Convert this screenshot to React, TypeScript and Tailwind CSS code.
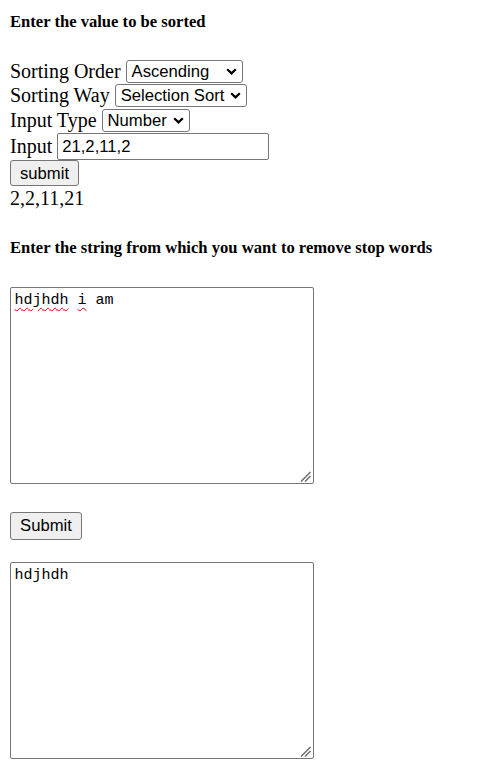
import React from "react";

function Chevron() {
  return (
    <svg width="11" height="7" viewBox="0 0 11 7" className="shrink-0">
      <path d="M1.2 1.3 L5.5 5.4 L9.8 1.3" fill="none" stroke="#000" strokeWidth="2.2" />
    </svg>
  );
}

function FakeSelect({ value, width }: { value: string; width: string }) {
  return (
    <div
      className={`inline-flex h-[23px] items-center justify-between rounded-[3px] border border-[#767676] bg-white pl-[5px] pr-[5px] font-['Liberation_Sans',Arial,sans-serif] text-[16.67px] leading-[19px] ${width}`}
    >
      <span>{value}</span>
      <Chevron />
    </div>
  );
}

function Grip() {
  return (
    <svg width="11" height="11" viewBox="0 0 11 11" className="absolute bottom-[1px] right-[2px]">
      <path d="M1 10.5 L10.5 1" stroke="#6b6b6b" strokeWidth="1.5" />
      <path d="M5 10.5 L10.5 5" stroke="#6b6b6b" strokeWidth="1.5" />
    </svg>
  );
}

function FakeTextarea({ children }: { children: React.ReactNode }) {
  return (
    <div className="relative h-[197px] w-[304px] rounded-[2px] border border-[#767676] bg-white pl-[3.5px] pt-[4px] font-['Liberation_Mono','DejaVu_Sans_Mono',monospace] text-[15px] leading-[17px]">
      <div className="whitespace-pre">{children}</div>
      <Grip />
    </div>
  );
}

export default function App() {
  return (
    <div className="min-h-screen bg-white pl-[10px] pt-[12px] font-['Liberation_Serif','Times_New_Roman',serif] text-[20px] text-black">
      <h5 className="text-[16.6px] font-bold leading-[19px]">Enter the value to be sorted</h5>

      <div className="mt-[28px] leading-[23px]">
        <div className="flex h-[24.5px] items-center gap-[5px]">
          <span>Sorting Order</span>
          <FakeSelect value="Ascending" width="w-[117px]" />
        </div>
        <div className="flex h-[24.5px] items-center gap-[5px]">
          <span>Sorting Way</span>
          <FakeSelect value="Selection Sort" width="w-[132px]" />
        </div>
        <div className="flex h-[24.5px] items-center gap-[5px]">
          <span>Input Type</span>
          <FakeSelect value="Number" width="w-[88px]" />
        </div>
        <div className="flex h-[27px] items-center gap-[5px]">
          <span>Input</span>
          <div className="flex h-[27px] w-[212px] items-center rounded-[2px] border border-[#767676] bg-white pl-[4px] font-['Liberation_Sans',Arial,sans-serif] text-[16.67px]">
            21,2,11,2
          </div>
        </div>
        <div className="flex h-[27px] items-center">
          <div className="flex h-[26px] w-[69px] items-center justify-center rounded-[3px] border border-[#767676] bg-[#efefef] font-['Liberation_Sans',Arial,sans-serif] text-[16.67px]">
            submit
          </div>
        </div>
        <div className="h-[23px]">2,2,11,21</div>
      </div>

      <h5 className="mt-[28.5px] text-[16.6px] font-bold leading-[19px]">
        Enter the string from which you want to remove stop words
      </h5>

      <div className="mt-[29.5px]">
        <FakeTextarea>
          <span className="underline decoration-red-600 decoration-wavy decoration-1 underline-offset-[3px]">hdjhdh</span>
          <span> </span>
          <span className="underline decoration-red-600 decoration-wavy decoration-1 underline-offset-[3px]">i</span>
          <span> am</span>
        </FakeTextarea>
      </div>

      <div className="mt-[28px] flex h-[28px] w-[72px] items-center justify-center rounded-[3px] border border-[#767676] bg-[#efefef] font-['Liberation_Sans',Arial,sans-serif] text-[16.67px]">
        Submit
      </div>

      <div className="mt-[22.5px]">
        <FakeTextarea>hdjhdh</FakeTextarea>
      </div>
    </div>
  );
}
